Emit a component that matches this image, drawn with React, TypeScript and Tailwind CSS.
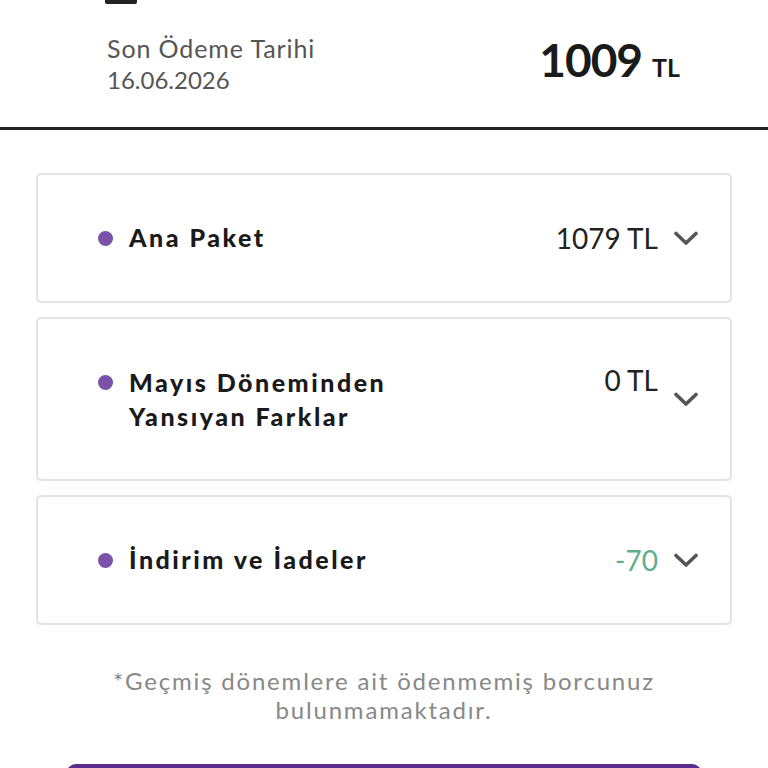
import React from "react";

function Chevron() {
  return (
    <svg width="24" height="15" viewBox="0 0 24 15" className="shrink-0">
      <path d="M2 2.5 L12 12 L22 2.5" fill="none" stroke="#555" strokeWidth="3.6" strokeLinecap="round" strokeLinejoin="round" />
    </svg>
  );
}

function Dot() {
  return <div className="w-[15px] h-[15px] rounded-full bg-[#7b51a9] shrink-0" />;
}

export default function App() {
  const font = { fontFamily: "Lato, 'Noto Sans', sans-serif" };
  return (
    <div className="w-[768px] h-[768px] overflow-hidden bg-white relative" style={font}>
      <div className="ml-[105px] w-[32px] h-[4px] bg-[#222] rounded-b-[2px]" />
      <div className="flex items-start justify-between pl-[107px] pr-[88px] pt-[29px] h-[123px]">
        <div className="text-[#555]">
          <div className="text-[25px] leading-[31px] tracking-[0.9px]">Son Ödeme Tarihi</div>
          <div className="text-[24px] leading-[31px]">16.06.2026</div>
        </div>
        <div className="flex items-baseline text-[#1a1a1a] font-bold">
          <span className="text-[46px] leading-[54px] tracking-[-1px]">1009</span>
          <span className="text-[25px] ml-[10px]">TL</span>
        </div>
      </div>
      <div className="h-[3px] bg-[#222]" />

      <div className="mt-[43px] mx-[36px] flex flex-col gap-[14px]">
        <div className="h-[130px] border-2 border-[#e3e3e3] rounded-[5px] flex items-center pl-[60px] pr-[32px]">
          <Dot />
          <div className="ml-[16px] flex-1 text-[25px] font-black tracking-[2.5px] text-[#1a1a1a]">Ana Paket</div>
          <div className="text-[28px] text-[#222] mr-[16px]">1079 TL</div>
          <Chevron />
        </div>

        <div className="h-[164px] border-2 border-[#e3e3e3] rounded-[5px] flex items-center pl-[60px] pr-[32px]">
          <div className="flex-1 flex items-start">
            <div className="flex items-start">
              <div className="mt-[10px]"><Dot /></div>
              <div className="ml-[16px] text-[25px] leading-[34px] font-black tracking-[2.5px] text-[#1a1a1a]">
                <div>Mayıs Döneminden</div>
                <div>Yansıyan Farklar</div>
              </div>
            </div>
            <div className="ml-auto text-[28px] leading-[30px] text-[#222] mr-[16px]">0 TL</div>
          </div>
          <Chevron />
        </div>

        <div className="h-[130px] border-2 border-[#e3e3e3] rounded-[5px] flex items-center pl-[60px] pr-[32px]">
          <Dot />
          <div className="ml-[16px] flex-1 text-[25px] font-black tracking-[2.5px] text-[#1a1a1a]">İndirim ve İadeler</div>
          <div className="text-[28px] text-[#5fae8c] mr-[16px]">-70</div>
          <Chevron />
        </div>
      </div>

      <div className="mt-[41px] text-center text-[24px] leading-[29px] tracking-[1.8px] text-[#888]">
        <div>*Geçmiş dönemlere ait ödenmemiş borcunuz</div>
        <div>bulunmamaktadır.</div>
      </div>

      <div className="mt-[40px] mx-[66px] h-[40px] bg-[#5b2d8a] rounded-t-[10px]" />
    </div>
  );
}
